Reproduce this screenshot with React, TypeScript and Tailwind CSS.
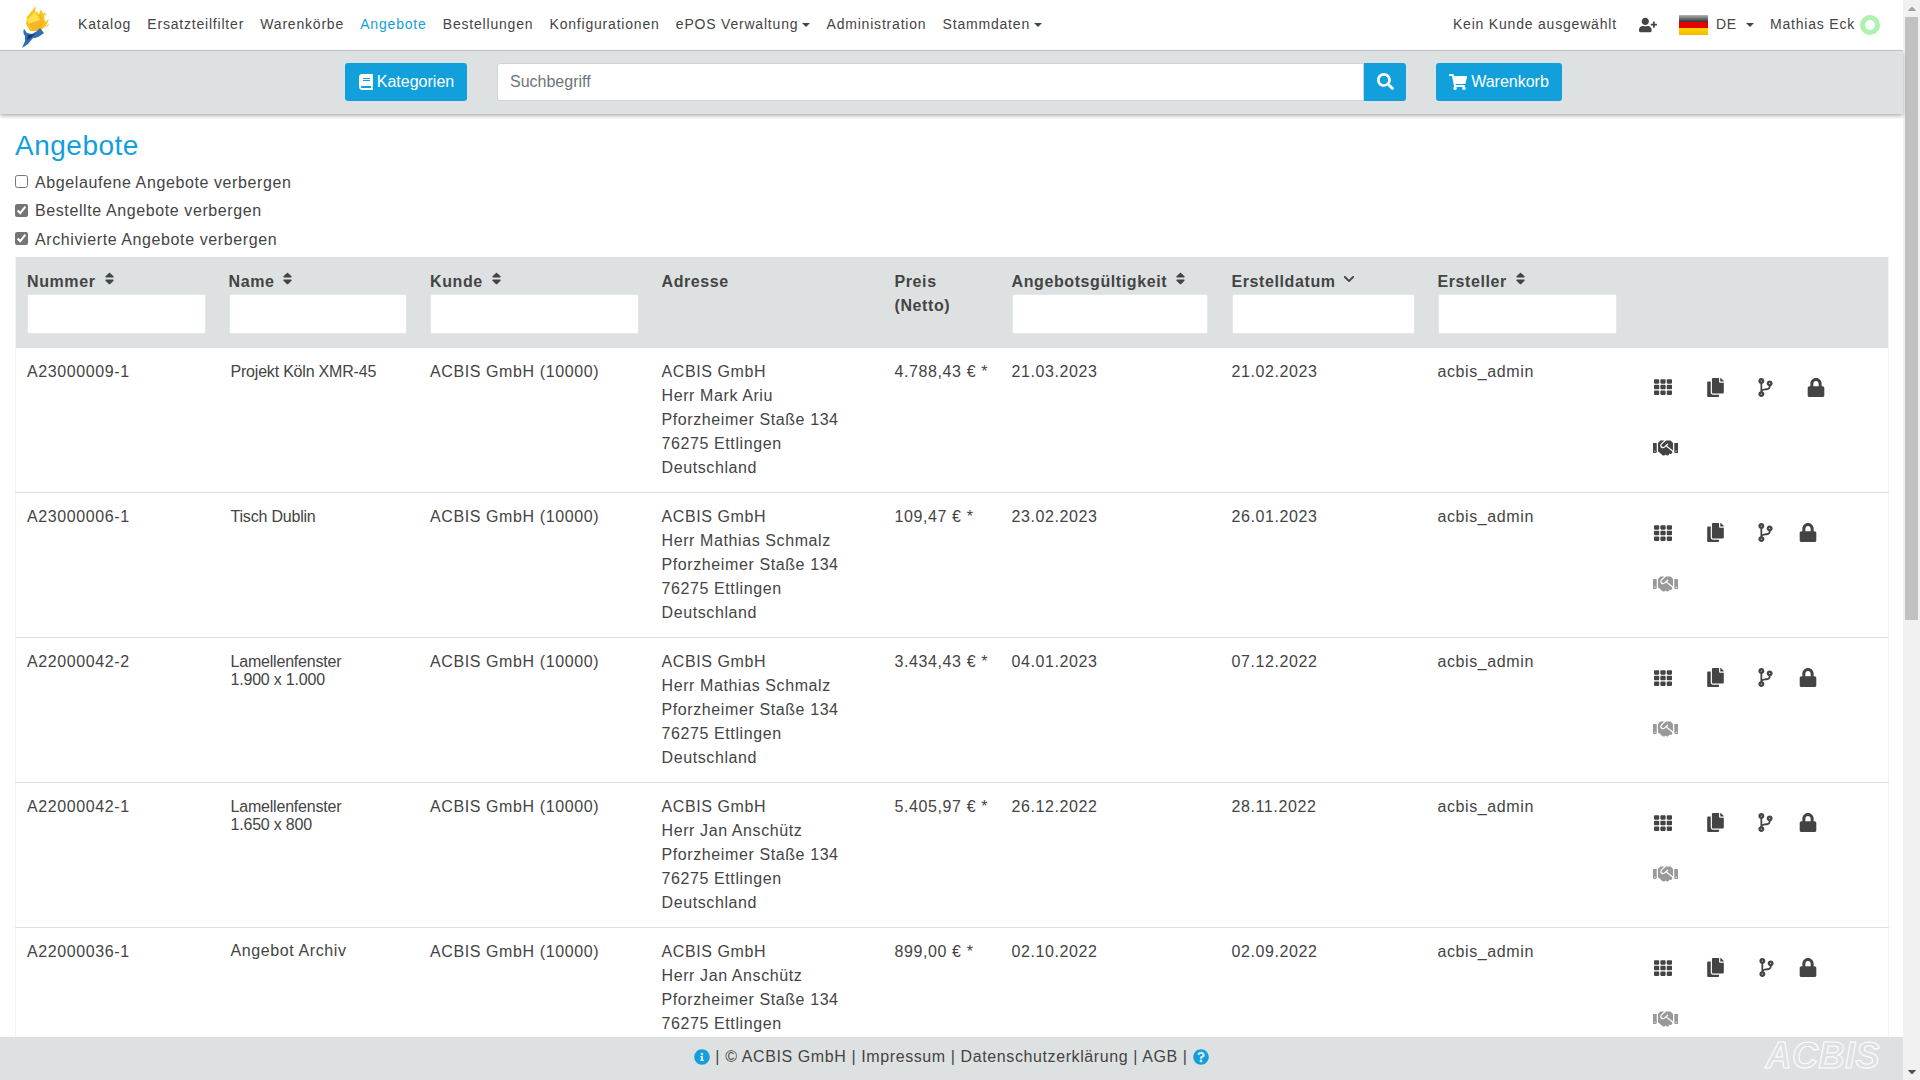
import {
  FaBook,
  FaCaretDown,
  FaCaretUp,
  FaChevronDown,
  FaCodeBranch,
  FaCopy,
  FaHandshake,
  FaInfoCircle,
  FaLock,
  FaQuestionCircle,
  FaSearch,
  FaShoppingCart,
  FaSort,
  FaTh,
  FaUserPlus,
} from "react-icons/fa";

const navItems = [
  { label: "Katalog" },
  { label: "Ersatzteilfilter" },
  { label: "Warenkörbe" },
  { label: "Angebote", active: true },
  { label: "Bestellungen" },
  { label: "Konfigurationen" },
  { label: "ePOS Verwaltung", caret: true },
  { label: "Administration" },
  { label: "Stammdaten", caret: true },
];

const rows = [
  {
    nr: "A23000009-1",
    name: ["Projekt Köln XMR-45"],
    contact: "Herr Mark Ariu",
    price: "4.788,43 € *",
    valid: "21.03.2023",
    created: "21.02.2023",
    first: true,
  },
  {
    nr: "A23000006-1",
    name: ["Tisch Dublin"],
    contact: "Herr Mathias Schmalz",
    price: "109,47 € *",
    valid: "23.02.2023",
    created: "26.01.2023",
  },
  {
    nr: "A22000042-2",
    name: ["Lamellenfenster", "1.900 x 1.000"],
    contact: "Herr Mathias Schmalz",
    price: "3.434,43 € *",
    valid: "04.01.2023",
    created: "07.12.2022",
  },
  {
    nr: "A22000042-1",
    name: ["Lamellenfenster", "1.650 x 800"],
    contact: "Herr Jan Anschütz",
    price: "5.405,97 € *",
    valid: "26.12.2022",
    created: "28.11.2022",
  },
  {
    nr: "A22000036-1",
    name: ["Angebot Archiv"],
    contact: "Herr Jan Anschütz",
    price: "899,00 € *",
    valid: "02.10.2022",
    created: "02.09.2022",
    plain: true,
  },
];

function Caret() {
  return <span className="ml-[4px] inline-block h-0 w-0 border-x-[4px] border-t-[4px] border-x-transparent border-t-[#444] align-middle" />;
}

function Logo() {
  return (
    <svg viewBox="0 0 40 50" className="h-[50px] w-[40px] shrink-0">
      <path d="M24 3 L26 9 L24 14 L20 11 L21 6 L16 12 L12 17 L11 24 L15 31 L25 31 L31 26 L34 19 L30 22 L29 14 L27 12 Z" fill="#fcc419" />
      <path d="M20 12 L25 20 L14 24 L12 20 Z" fill="#ffe14d" />
      <path d="M25 15 L29 22 L25 30 L18 31 L14 24 L25 20 Z" fill="#f7b32b" />
      <path d="M31 27 L34 23 L33 26 Z M30 12 L31 16 L29 14 Z" fill="#f9a825" />
      <path d="M9 29 L12 33 L17 34 L22 31 L25 28 L29 33 C25 36 22 38 18 38 L13 44 L7 48 L10 41 L10 36 C8 34 8 31 9 29Z" fill="#2f6db5" />
      <path d="M13 35 L20 34 L16 38 L12 40 Z" fill="#16407c" />
    </svg>
  );
}

function Flag() {
  return (
    <div className="flex h-[20px] w-[29px] flex-col overflow-hidden">
      <div className="h-[7px] bg-gradient-to-b from-[#b5b5b5] to-[#333]" />
      <div className="h-[6px] bg-[#e60000]" />
      <div className="h-[7px] bg-gradient-to-b from-[#ffd800] to-[#f7b500]" />
    </div>
  );
}

function HeadLabel({ text, sort = true, down = false }: { text: string; sort?: boolean; down?: boolean }) {
  return (
    <div className="flex h-[24px] items-center font-bold">
      {text}
      {sort && !down && <FaSort className="ml-[6px] -translate-y-[3px] text-[15px]" />}
      {down && <FaChevronDown className="ml-[7px] -translate-y-[3px] text-[12px]" />}
    </div>
  );
}

function FilterInput({ width }: { width: string }) {
  return <input className={`block h-[40px] rounded-[2px] border border-[#e4e7e8] bg-white ${width}`} />;
}

function RowIcons({ first, plain }: { first?: boolean; plain?: boolean }) {
  return (
    <div className={`flex flex-col pt-[30px] text-[#444] ${first ? "gap-[41px]" : "gap-[32px]"}`}>
      <div className="flex items-center">
        <FaTh className="h-[18px] w-[20px]" />
        <FaCopy className="ml-[34px] h-[19px] w-[17px]" />
        <FaCodeBranch className={`h-[19px] w-[15px] ${plain ? "ml-[35px]" : "ml-[34px]"}`} />
        <FaLock className={`h-[19px] w-[18px] ${first ? "ml-[34px]" : plain ? "ml-[25px]" : "ml-[26px]"}`} />
      </div>
      <FaHandshake className={`h-[20px] w-[25px] ${first ? "" : "text-[#999]"}`} />
    </div>
  );
}

export default function App() {
  return (
    <div className="flex h-screen overflow-hidden bg-white font-['Liberation_Sans',Arial,sans-serif] text-[16px] tracking-[0.6px] text-[#444]">
      <div className="flex min-w-0 flex-1 flex-col">
        {/* Navigation */}
        <nav className="flex h-[51px] shrink-0 items-center border-b border-[#c4c7c8] pb-[1px] pl-[15px] pr-[23px] text-[14px] tracking-[0.8px]">
          <Logo />
          <div className="ml-[23px] flex items-center gap-[16.2px]">
            {navItems.map((item) => (
              <span key={item.label} className={item.active ? "text-[#11a0dc]" : ""}>
                {item.label}
                {item.caret && <Caret />}
              </span>
            ))}
          </div>
          <div className="ml-auto flex items-center">
            <span>Kein Kunde ausgewählt</span>
            <FaUserPlus className="ml-[22px] text-[18px]" />
            <div className="ml-[22px]">
              <Flag />
            </div>
            <span className="ml-[8px]">DE</span>
            <span className="ml-[9px] h-0 w-0 border-x-[4px] border-t-[4px] border-x-transparent border-t-[#444]" />
            <span className="ml-[16px]">Mathias Eck</span>
            <span className="ml-[5px] h-[20px] w-[20px] rounded-full border-[5px] border-[#aef2ae]" />
          </div>
        </nav>

        {/* Search */}
        <div className="relative z-10 flex h-[63px] shrink-0 items-center justify-center gap-[30px] bg-[#dee1e2] pb-[2px] pl-[4px] shadow-[0_2px_4px_rgba(0,0,0,0.3)] tracking-normal">
          <button className="flex h-[38px] w-[122px] items-center justify-center gap-[3px] rounded-[3px] bg-[#11a0dc] text-white">
            <FaBook className="text-[16px]" />
            Kategorien
          </button>
          <div className="flex h-[38px] w-[909px]">
            <input
              placeholder="Suchbegriff"
              className="min-w-0 flex-1 rounded-l-[3px] border border-[#ced4da] bg-white px-[12px] text-[16px] placeholder:text-[#6c757d]"
            />
            <button className="flex w-[42px] items-center justify-center rounded-r-[3px] bg-[#11a0dc] text-white">
              <FaSearch className="text-[17px]" />
            </button>
          </div>
          <button className="flex h-[38px] w-[126px] items-center justify-center gap-[4px] rounded-[3px] bg-[#11a0dc] text-white">
            <FaShoppingCart className="text-[18px]" />
            Warenkorb
          </button>
        </div>

        {/* Content */}
        <main className="min-h-0 flex-1 overflow-hidden px-[15px]">
          <h1 className="mt-[15px] text-[28px] font-normal leading-[34px] tracking-[0.5px] text-[#11a0dc]">Angebote</h1>
          <div className="mt-[5.5px] flex flex-col">
            {[
              { label: "Abgelaufene Angebote verbergen", checked: false },
              { label: "Bestellte Angebote verbergen", checked: true },
              { label: "Archivierte Angebote verbergen", checked: true },
            ].map((c) => (
              <label key={c.label} className="flex h-[28.5px] items-center gap-[7px]">
                <input type="checkbox" defaultChecked={c.checked} className="m-0 h-[13px] w-[13px] -translate-y-[1px] accent-[#757575]" />
                {c.label}
              </label>
            ))}
          </div>
          <table className="mt-[2.5px] w-[1874px] table-fixed border-collapse border-x border-[#f3f3f3]">
            <colgroup>
              <col className="w-[202px]" />
              <col className="w-[201px]" />
              <col className="w-[231px]" />
              <col className="w-[233px]" />
              <col className="w-[117px]" />
              <col className="w-[221px]" />
              <col className="w-[205px]" />
              <col className="w-[215px]" />
              <col />
            </colgroup>
            <thead>
              <tr className="h-[91px] bg-[#dee1e2] align-top">
                <th className="pl-[11px] pt-[13px] text-left font-normal">
                  <HeadLabel text="Nummer" />
                  <FilterInput width="w-[179px]" />
                </th>
                <th className="pl-[11px] pt-[13px] text-left font-normal">
                  <HeadLabel text="Name" />
                  <FilterInput width="w-[178px]" />
                </th>
                <th className="pl-[11.5px] pt-[13px] text-left font-normal">
                  <HeadLabel text="Kunde" />
                  <FilterInput width="w-[209px]" />
                </th>
                <th className="pl-[12px] pt-[13px] text-left font-normal">
                  <HeadLabel text="Adresse" sort={false} />
                </th>
                <th className="pl-[12px] pt-[13px] text-left font-bold leading-[24px]">
                  Preis
                  <br />
                  (Netto)
                </th>
                <th className="pl-[12px] pt-[13px] text-left font-normal">
                  <HeadLabel text="Angebotsgültigkeit" />
                  <FilterInput width="w-[196px]" />
                </th>
                <th className="pl-[11px] pt-[13px] text-left font-normal">
                  <HeadLabel text="Erstelldatum" down />
                  <FilterInput width="w-[183px]" />
                </th>
                <th className="pl-[12px] pt-[13px] text-left font-normal">
                  <HeadLabel text="Ersteller" />
                  <FilterInput width="w-[179px]" />
                </th>
                <th />
              </tr>
            </thead>
            <tbody>
              {rows.map((r) => (
                <tr key={r.nr} className="h-[145px] border-b border-[#dee2e6] align-top leading-[24px]">
                  <td className="pl-[11px] pt-[12px]">{r.nr}</td>
                  <td className={`pl-[13px] leading-[18px] tracking-[-0.2px] ${r.plain ? "pt-[14px]" : "pt-[15px]"}`}>
                    {r.plain ? (
                      <span className="tracking-[0.6px]">{r.name[0]}</span>
                    ) : (
                      r.name.map((line) => <div key={line}>{line}</div>)
                    )}
                  </td>
                  <td className="pl-[11.5px] pt-[12px]">ACBIS GmbH (10000)</td>
                  <td className="pl-[12px] pt-[12px]">
                    <div>ACBIS GmbH</div>
                    <div>{r.contact}</div>
                    <div>Pforzheimer Staße 134</div>
                    <div>76275 Ettlingen</div>
                    <div>Deutschland</div>
                  </td>
                  <td className="pl-[12px] pt-[12px]">{r.price}</td>
                  <td className="pl-[12px] pt-[12px]">{r.valid}</td>
                  <td className="pl-[11px] pt-[12px]">{r.created}</td>
                  <td className="pl-[12px] pt-[12px]">acbis_admin</td>
                  <td className="pl-[12px]">
                    <RowIcons first={r.first} plain={r.plain} />
                  </td>
                </tr>
              ))}
            </tbody>
          </table>
        </main>

        {/* Footer */}
        <footer className="relative flex h-[43px] shrink-0 items-center justify-center gap-[5px] bg-[#dee1e2] pb-[4px]">
          <FaInfoCircle className="text-[16px] text-[#11a0dc]" />
          <span>| © ACBIS GmbH | Impressum | Datenschutzerklärung | AGB |</span>
          <FaQuestionCircle className="text-[16px] text-[#11a0dc]" />
          <span className="absolute right-[23px] top-[-2px] text-[36px] font-bold italic leading-[42px] tracking-[0.5px] text-transparent [-webkit-text-stroke:1px_#ffffff]">
            ACBIS
          </span>
        </footer>
      </div>

      {/* Page scrollbar */}
      <div className="flex w-[17px] shrink-0 flex-col items-center bg-[#f1f1f1]">
        <FaCaretUp className="mt-[2px] h-[13px] w-[12px] text-[#a3a3a3]" />
        <div className="mt-[2px] h-[603px] w-[13px] bg-[#c1c1c1]" />
        <FaCaretDown className="mt-auto mb-[2px] h-[13px] w-[12px] text-[#505050]" />
      </div>
    </div>
  );
}
